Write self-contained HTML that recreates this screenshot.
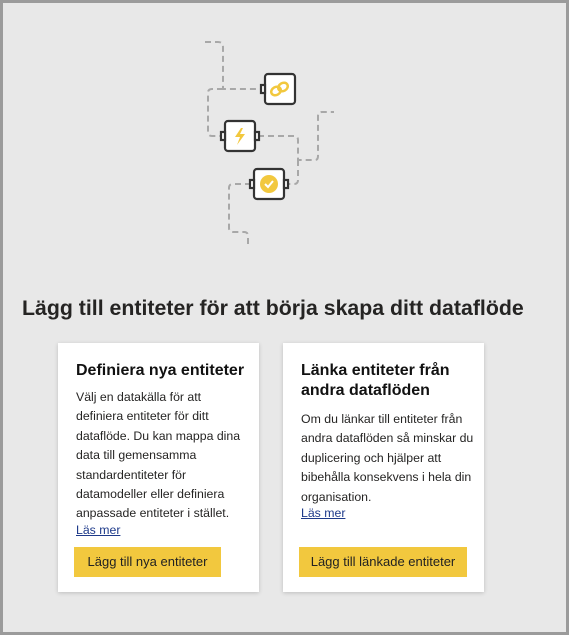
<!DOCTYPE html>
<html><head><style>
html,body{margin:0;padding:0}
body{width:569px;height:635px;overflow:hidden;font-family:"Liberation Sans",sans-serif;}
.frame{position:absolute;left:0;top:0;width:563px;height:629px;border:3px solid #9b9b9b;background:#e8e8e8;}
h1{position:absolute;left:19px;top:293px;margin:0;font-size:21.3px;font-weight:bold;color:#252423;white-space:nowrap}
.card{position:absolute;top:340px;width:201px;height:249px;background:#fff;box-shadow:0 1px 4px rgba(0,0,0,.18);}
.card h2{margin:0;position:absolute;left:18px;top:18px;font-size:16px;font-weight:bold;line-height:20px;color:#111;width:180px}
.card p{margin:0;position:absolute;left:18px;font-size:12.3px;line-height:19.4px;color:#252423;width:172px}
.card a{position:absolute;left:18px;font-size:12.3px;color:#1e3a8a;text-decoration:underline}
.btn{position:absolute;left:16px;top:204px;height:30px;background:#f2c83e;font-size:13px;line-height:30px;text-align:center;color:#222}
</style></head><body>
<div class="frame">
<svg width="563" height="629" style="position:absolute;left:0;top:0" viewBox="3 3 563 629">
<g fill="none" stroke="#a8a8a8" stroke-width="2" stroke-dasharray="6,4">
<path d="M205 42 H218 Q223 42 223 47 V89 H262"/>
<path d="M223 89 H212 Q208 89 208 93 V132 Q208 136 212 136 H222"/>
<path d="M258 136 H294 Q298 136 298 140 V160 H315 Q318 160 318 156 V116 Q318 112 322 112 H334"/>
<path d="M298 160 V180 Q298 184 294 184 H287"/>
<path d="M251 184 H233 Q229 184 229 188 V228 Q229 232 233 232 H244 Q248 232 248 236 V248"/>
</g>
<g stroke="#333" stroke-width="2.2" fill="#fff">
<rect x="265" y="74" width="30" height="30" rx="3"/>
<rect x="261" y="85" width="4" height="8"/>
<rect x="225" y="121" width="30" height="30" rx="3"/>
<rect x="221" y="132" width="4" height="8"/>
<rect x="255" y="132" width="4" height="8"/>
<rect x="254" y="169" width="30" height="30" rx="3"/>
<rect x="250" y="180" width="4" height="8"/>
<rect x="284" y="180" width="4" height="8"/>
</g>
<g fill="none" stroke="#f2c83e" stroke-width="2.5">
<ellipse cx="276" cy="91" rx="5" ry="4" transform="rotate(-30 276 91)"/>
<ellipse cx="283" cy="87" rx="5" ry="4" transform="rotate(-30 283 87)"/>
</g>
<path d="M241 128 L235 137 H240 L237 145 L245 134 H240 L243 128 Z" fill="#f2c83e"/>
<circle cx="269" cy="184" r="9" fill="#f2c83e"/>
<path d="M265 184 L268 187 L273 181" stroke="#fff" stroke-width="2" fill="none"/>
</svg>
<h1>Lägg till entiteter för att börja skapa ditt dataflöde</h1>
<div class="card" style="left:55px">
<h2>Definiera nya entiteter</h2>
<p style="top:45px;width:165px">Välj en datakälla för att definiera entiteter för ditt dataflöde. Du kan mappa dina data till gemensamma standardentiteter för datamodeller eller definiera anpassade entiteter i stället.</p>
<a style="top:180px">Läs mer</a>
<div class="btn" style="width:147px">Lägg till nya entiteter</div>
</div>
<div class="card" style="left:280px">
<h2>Länka entiteter från andra dataflöden</h2>
<p style="top:67px;width:175px">Om du länkar till entiteter från andra dataflöden så minskar du duplicering och hjälper att bibehålla konsekvens i hela din organisation.</p>
<a style="top:163px">Läs mer</a>
<div class="btn" style="width:168px">Lägg till länkade entiteter</div>
</div>
</div>
</body></html>
